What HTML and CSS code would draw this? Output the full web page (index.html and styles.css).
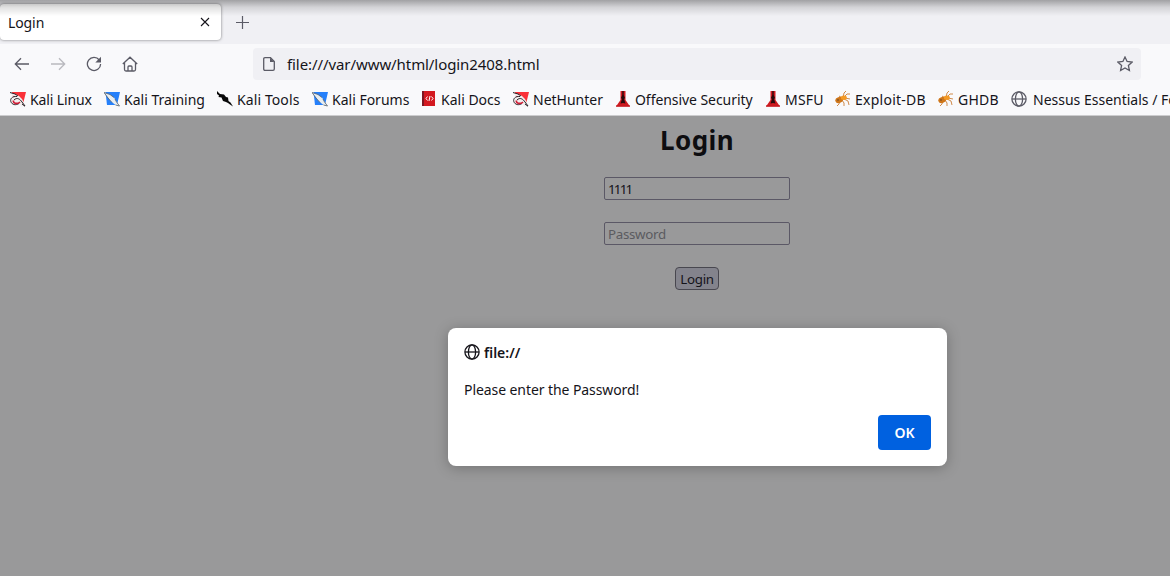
FILE: index.html
```html
<!DOCTYPE html>
<html lang="en">
<head>
  <meta charset="UTF-8" />
  <title>Login</title>
  <link rel="stylesheet" href="styles.css">
</head>
<body>
  <!-- shared icons -->
  <svg class="defs">
    <symbol id="globe" viewBox="0 0 16 16">
      <g fill="none" stroke="currentColor" stroke-width="1.3"><circle cx="8" cy="8" r="7.1"/><ellipse cx="8" cy="8" rx="3.6" ry="7.1"/><path d="M1 8h14"/></g>
    </symbol>
    <symbol id="kali-red" viewBox="0 0 16 16">
      <path d="M2 1h14l-3 12H5z" fill="#fa3038"/>
      <path d="M0 2l5 1 4 2 3 3 2 4 2 3-4 .5-3-3-4 2-4-2 0-4 3-3z" fill="#f3eeee"/>
      <path d="M0 1.500l5 1.500 3 2M7 5.500C2 5 0 8 .8 10.500 2 14 6 14.500 9 12.500M4 9c3-3 6-1 8 2l3 4M12 13l3 2.300" fill="none" stroke="#292329" stroke-width="1"/>
      <path d="M3.500 9.500c-1 3 4 4 6.500 1.500" fill="none" stroke="#d01b35" stroke-width="1.700"/>
    </symbol>
    <symbol id="kali-blue" viewBox="0 0 16 16">
      <path d="M1.500 1H16l-3 13H3z" fill="#2680fa"/>
      <path d="M0 1.500l6 2 4 3 2.500 4 3 4.500-4-1-5-4-3-4z" fill="#e8edf0"/>
      <path d="M0 1.500l6 2 4 3M0 1.500L4 7l4 4.500M11 8l1.500 3 3 4-4-1" fill="none" stroke="#56616c" stroke-width=".8"/>
    </symbol>
    <symbol id="dragon" viewBox="0 0 16 16">
      <path d="M0 0l3 3 4 .5 2 2.500 2 .5.500 3.500 2 1.500L16 15.500l-3-2-2-1.500-2-1-3-1-1.500-3.500L1.500 6l.5-1.500L0 3z" fill="#090909"/>
    </symbol>
    <symbol id="offsec" viewBox="0 0 14 16">
      <path d="M4.500 0h5v9l4.500 6.500H0L4.500 9z" fill="#cf1a20"/>
      <path d="M6.300 0h1.400v4l1.300 3-1 1 1.500 4.500L7 12l-2.500.5L6 8 5 7l1.300-3z" fill="#260b0d"/>
      <path d="M0 15h14" stroke="#c41820"/>
    </symbol>
    <symbol id="bug" viewBox="0 0 16 16">
      <g fill="none" stroke="#d08b4b" stroke-width="1"><path d="M8 7l1-5 2-2M9 6l3-3 3 0M10 7l5 1M9 8l4 2 1 4M7 9l2 3v3M5 10l-1 3-2 2M7 7L4 5"/></g>
      <ellipse cx="4.200" cy="9" rx="4" ry="3" fill="#cf7619" transform="rotate(-20 4.200 9)"/>
      <ellipse cx="8.800" cy="6.800" rx="3" ry="2.200" fill="#f49a25"/>
      <circle cx="3" cy="9" r="1" fill="#8c5922"/>
    </symbol>
  </svg>

  <div class="browser">
    <div class="tab-bar">
      <div class="tab">
        <span>Login</span>
        <svg class="close" viewBox="0 0 10 10"><path d="M1 1l8 8M9 1L1 9"/></svg>
      </div>
      <svg class="new-tab" viewBox="0 0 13 13"><path d="M6.500 0v13M0 6.500h13"/></svg>
    </div>

    <div class="toolbar">
      <div class="nav">
        <svg viewBox="0 0 16 16"><path d="M15 8H1.500M7 2.300L1.300 8 7 13.700"/></svg>
        <svg class="disabled" viewBox="0 0 16 16"><path d="M1 8h13.500M9 2.300L14.700 8 9 13.700"/></svg>
        <svg viewBox="0 0 16 16"><path d="M13.300 4A6.600 6.600 0 1 0 14.600 8"/><path class="fill" d="M15 .8v5.700H9.300z"/></svg>
        <svg viewBox="0 0 16 16"><path d="M.8 8L8 1.200 15.200 8M2.500 7v6.500q0 1.500 1.500 1.500h8q1.500 0 1.500-1.500V7M6 15v-4q0-1 1-1h2q1 0 1 1v4"/></svg>
      </div>
      <div class="url-bar">
        <svg class="page-icon" viewBox="0 0 12 14"><path d="M2 .7h5.500l3.800 3.800V12q0 1.300-1.300 1.300H2Q.7 13.300.7 12V2Q.7.700 2 .7z"/><path class="fill" d="M7 .7l4.300 4.300H7z"/></svg>
        <span>file:///var/www/html/login2408.html</span>
        <svg class="star" viewBox="0 0 16 16"><path d="M8 1l2.100 4.500 5 .6-3.700 3.400 1 5L8 12l-4.400 2.500 1-5L.9 6.100l5-.6z"/></svg>
      </div>
    </div>

    <div class="bookmarks">
      <a class="w-linux"><svg><use href="#kali-red"/></svg>Kali Linux</a>
      <a class="w-training"><svg><use href="#kali-blue"/></svg>Kali Training</a>
      <a class="w-tools"><svg><use href="#dragon"/></svg>Kali Tools</a>
      <a class="w-forums"><svg><use href="#kali-blue"/></svg>Kali Forums</a>
      <a class="w-docs"><svg viewBox="0 0 16 16"><path d="M1 0h13v15H1z" fill="#d31920" stroke="none"/><path d="M1 0h2v15H1z" fill="#7d1721" stroke="none"/><path d="M6.500 5.500L5 7.500l1.500 2M10.500 5.500l1.500 2-1.500 2M9 5l-1 5" fill="none" stroke="#fff" stroke-width="1"/></svg>Kali Docs</a>
      <a class="w-hunter"><svg><use href="#kali-red"/></svg>NetHunter</a>
      <a class="w-offsec"><svg><use href="#offsec"/></svg>Offensive Security</a>
      <a class="w-msfu"><svg><use href="#offsec"/></svg>MSFU</a>
      <a class="w-exploit"><svg><use href="#bug"/></svg>Exploit-DB</a>
      <a class="w-ghdb"><svg><use href="#bug"/></svg>GHDB</a>
      <a class="nessus"><svg><use href="#globe"/></svg>Nessus Essentials / Fo</a>
    </div>

    <div class="page">
      <h2>Login</h2>
      <form>
        <input class="user" type="text" value="1111">
        <input type="password" placeholder="Password">
        <button type="button">Login</button>
      </form>
      <div class="dialog">
        <div class="origin"><svg><use href="#globe"/></svg>file://</div>
        <p>Please enter the Password!</p>
        <button class="ok">OK</button>
      </div>
    </div>
  </div>
</body>
</html>
```
FILE: styles.css
```css
* {
  box-sizing: border-box;
}

body {
  margin: 0;
  height: 576px;
  overflow: hidden;
  font-family: "Noto Sans", sans-serif;
  font-size: 14px;
  color: #15141a;
}

.defs {
  display: none;
}

svg {
  flex: none;
  fill: none;
  stroke: #5b5b66;
  stroke-width: 1.3;
}

symbol, use {
  stroke: none;
}

svg .fill {
  fill: #5b5b66;
  stroke: none;
}

.browser {
  position: relative;
  display: flex;
  flex-direction: column;
  width: 1170px;
  height: 576px;
  overflow: hidden;
}

/* window shadow across the top edge */
.browser::before {
  content: "";
  position: absolute;
  top: 0;
  left: 0;
  right: 0;
  height: 16px;
  background: linear-gradient(rgba(0, 0, 0, .33), rgba(0, 0, 0, .12) 45%, rgba(0, 0, 0, 0));
}

.tab-bar {
  display: flex;
  align-items: center;
  height: 44px;
  background: #f0f0f4;
}

.tab {
  display: flex;
  align-items: center;
  justify-content: space-between;
  width: 221px;
  height: 36px;
  padding: 0 11px 0 8px;
  background: #fff;
  border-radius: 4px;
  box-shadow: 0 0 3px rgba(0, 0, 0, .5);
  letter-spacing: -.1px;
}

.close {
  width: 10px;
  height: 10px;
  stroke: #15141a;
  stroke-width: 1.1;
}

.new-tab {
  width: 13px;
  height: 13px;
  margin-left: 15px;
  stroke-width: 1.2;
}

.toolbar {
  display: flex;
  align-items: center;
  height: 41px;
  padding-bottom: 1px;
  background: #f9f9fb;
}

.nav {
  display: flex;
  gap: 20px;
  width: 253px;
  padding-left: 14px;
}

.nav svg {
  width: 16px;
  height: 16px;
}

.disabled {
  opacity: .4;
}

.url-bar {
  display: flex;
  align-items: center;
  width: 888px;
  height: 32px;
  padding: 0 8px 0 10px;
  background: #f0f0f4;
  border-radius: 4px;
  font-size: 15px;
  letter-spacing: -.08px;
}

.url-bar span {
  flex: 1;
  margin-left: 12px;
}

.page-icon {
  width: 12px;
  height: 14px;
}

.star {
  width: 16px;
  height: 16px;
}

.bookmarks {
  display: flex;
  align-items: center;
  height: 31px;
  padding: 0 0 2px 10px;
  overflow: hidden;
  background: #f9f9fb;
  border-bottom: 1px solid #ccccce;
  white-space: nowrap;
}

.bookmarks a {
  display: flex;
  flex: none;
  align-items: center;
  gap: 4px;
}

.bookmarks svg {
  width: 16px;
  height: 16px;
}

.w-linux { width: 94px; letter-spacing: -.12px; }
.w-training { width: 113px; }
.w-tools { width: 95px; letter-spacing: .1px; }
.w-forums { width: 109px; }
.w-docs { width: 92px; }
.w-hunter { width: 102px; }
.w-offsec { width: 150px; letter-spacing: -.06px; }
.w-msfu { width: 70px; letter-spacing: .2px; }
.w-exploit { width: 103px; letter-spacing: .25px; }
.w-ghdb { width: 73px; letter-spacing: .2px; }

.bookmarks .nessus {
  gap: 6px;
}

.nessus svg {
  color: #5b5b66;
}

/* content is centred on x=697, the window continues to the right */
.page {
  position: relative;
  flex: 1;
  padding-left: 224px;
  background: #99999a;
}

h2 {
  margin: 6px 0 0;
  font-size: 26px;
  line-height: 36px;
  letter-spacing: .4px;
  text-align: center;
  color: #0d0d10;
}

form {
  display: flex;
  flex-direction: column;
  align-items: center;
  gap: 22px;
  margin-top: 19px;
}

form input,
form button {
  height: 23px;
  font: 13.33px "Noto Sans", sans-serif;
  color: #15141a;
  border: 1px solid #5b5866;
  border-radius: 2px;
}

form input {
  width: 186px;
  padding: 1px 3px;
  background: #99999a;
}

form .user {
  letter-spacing: -1.8px;
}

form input::placeholder {
  color: #5b5b60;
  letter-spacing: -.3px;
}

form button {
  width: 44px;
  padding: 0;
  background: #83838c;
  border-color: #48474f;
  border-radius: 4px;
  letter-spacing: -.3px;
}

.dialog {
  position: absolute;
  top: 212px;
  left: 448px;
  display: flex;
  flex-direction: column;
  width: 499px;
  height: 138px;
  padding: 14px 16px 16px;
  background: #fff;
  border-radius: 8px;
  box-shadow: 0 2px 14px rgba(0, 0, 0, .25);
}

.origin {
  display: flex;
  align-items: center;
  gap: 4px;
  height: 20px;
  font-weight: 600;
}

.origin svg {
  width: 16px;
  height: 16px;
}

.dialog p {
  margin: 18px 0 0;
  line-height: 20px;
  letter-spacing: -.08px;
}

.ok {
  align-self: flex-end;
  width: 53px;
  height: 35px;
  margin-top: auto;
  padding: 0;
  font: 600 14px "Noto Sans", sans-serif;
  color: #fff;
  background: #0061e0;
  border: 0;
  border-radius: 4px;
}
```
